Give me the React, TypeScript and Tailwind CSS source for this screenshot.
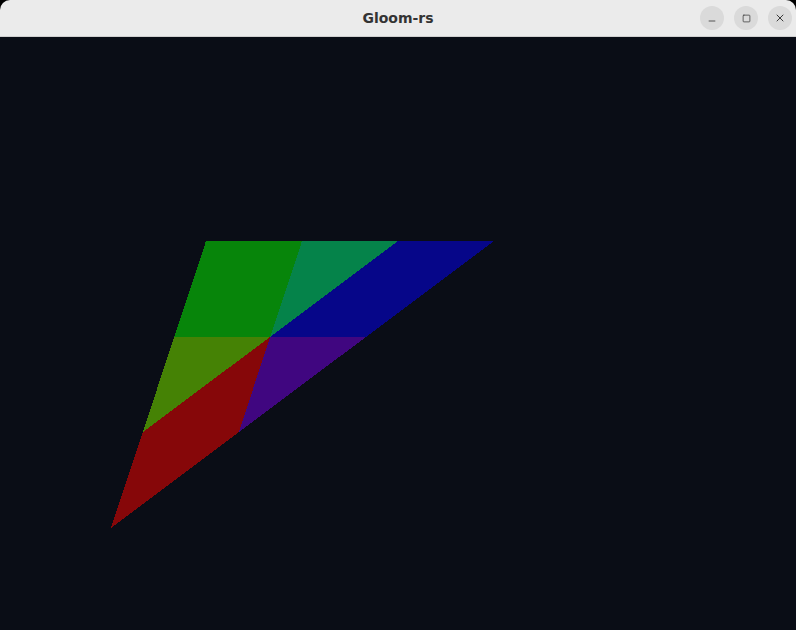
import { X, Minus, Square } from 'lucide-react';

// vertices of the rendered triangle, in page pixels
const A: [number, number] = [206, 241];
const B: [number, number] = [494, 241];
const D: [number, number] = [111, 528];

const lerp = (p: [number, number], q: [number, number], t: number): [number, number] => [
  p[0] + (q[0] - p[0]) * t,
  p[1] + (q[1] - p[1]) * t,
];

const C: [number, number] = [(A[0] + B[0] + D[0]) / 3, (A[1] + B[1] + D[1]) / 3];
const ab1 = lerp(A, B, 1 / 3);
const ab2 = lerp(A, B, 2 / 3);
const bd1 = lerp(B, D, 1 / 3);
const bd2 = lerp(B, D, 2 / 3);
const ad1 = lerp(A, D, 1 / 3);
const ad2 = lerp(A, D, 2 / 3);

const pieces: { pts: [number, number][]; fill: string }[] = [
  { pts: [A, ab1, C, ad1], fill: '#07850a' },
  { pts: [ab1, ab2, C], fill: '#05834a' },
  { pts: [ab2, B, bd1, C], fill: '#060689' },
  { pts: [C, bd1, bd2], fill: '#400680' },
  { pts: [C, bd2, D, ad2], fill: '#860709' },
  { pts: [ad1, C, ad2], fill: '#458205' },
];

function TitleButton({ children }: { children: React.ReactNode }) {
  return (
    <div className="w-6 h-6 rounded-full bg-[#dadada] flex items-center justify-center text-[#3a3a3a]">
      {children}
    </div>
  );
}

export default function App() {
  return (
    <div className="w-[796px] h-[630px] bg-black flex flex-col overflow-hidden">
      {/** Title bar */}
      <div className="relative h-[37px] shrink-0 rounded-t-[10px] bg-[#ebebeb] border-b border-[#cfcfcf] flex items-center justify-center">
        <span
          className="text-[14px] font-bold text-[#333333]"
          style={{ fontFamily: '"DejaVu Sans", sans-serif' }}
        >
          Gloom-rs
        </span>
        <div className="absolute right-[4px] top-[6px] flex gap-[10px]">
          <TitleButton>
            <Minus size={10} strokeWidth={2} className="mt-[5px]" />
          </TitleButton>
          <TitleButton>
            <Square size={9} strokeWidth={2} />
          </TitleButton>
          <TitleButton>
            <X size={12} strokeWidth={2} />
          </TitleButton>
        </div>
      </div>
      {/** GL canvas */}
      <div className="flex-1 bg-[#0a0d16]">
        <svg width="796" height="593" viewBox="0 37 796 593" shapeRendering="crispEdges">
          {pieces.map((p, i) => (
            <polygon key={i} points={p.pts.map((v) => v.join(',')).join(' ')} fill={p.fill} />
          ))}
        </svg>
      </div>
    </div>
  );
}
